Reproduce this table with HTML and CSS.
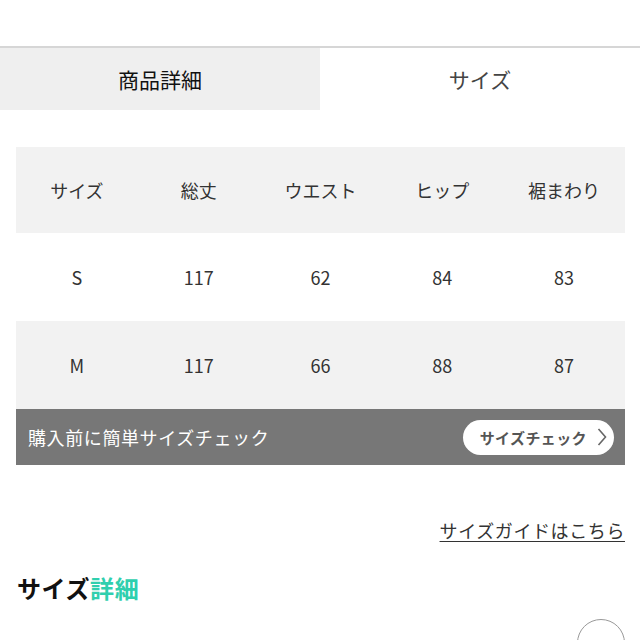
FILE: index.html
```html
<!DOCTYPE html>
<html lang="ja">
<head>
<meta charset="utf-8">
<link rel="stylesheet" href="styles.css">
</head>
<body>
<div class="page">
  <div class="tabs">
    <div class="tab tab-active">商品詳細</div>
    <div class="tab">サイズ</div>
  </div>

  <div class="size-table">
    <div class="row row-gray">
      <div class="cell">サイズ</div>
      <div class="cell">総丈</div>
      <div class="cell">ウエスト</div>
      <div class="cell">ヒップ</div>
      <div class="cell">裾まわり</div>
    </div>
    <div class="row">
      <div class="cell">S</div>
      <div class="cell">117</div>
      <div class="cell">62</div>
      <div class="cell">84</div>
      <div class="cell">83</div>
    </div>
    <div class="row row-gray">
      <div class="cell">M</div>
      <div class="cell">117</div>
      <div class="cell">66</div>
      <div class="cell">88</div>
      <div class="cell">87</div>
    </div>
    <div class="banner">
      <span class="banner-text">購入前に簡単サイズチェック</span>
      <span class="pill">サイズチェック
        <svg class="chev" width="12" height="20" viewBox="0 0 12 20"><path d="M2.5 2 L9.5 10 L2.5 18" fill="none" stroke="#666" stroke-width="1.6"/></svg>
      </span>
    </div>
  </div>

  <div class="guide-row"><a class="guide">サイズガイドはこちら</a></div>

  <h2 class="heading">サイズ<span class="accent">詳細</span></h2>

  <div class="circle-row"><div class="circle"></div></div>
</div>
</body>
</html>
```

FILE: styles.css
```css
html, body {
  margin: 0;
  padding: 0;
  background: #fff;
  overflow: hidden;
}
body {
  font-family: "Noto Sans CJK JP", "Noto Sans", sans-serif;
  color: #333;
}
.page {
  padding-top: 46px;
}
.tabs {
  display: flex;
  border-top: 2px solid #d6d6d6;
  height: 62px;
}
.tab {
  flex: 1;
  display: flex;
  align-items: center;
  justify-content: center;
  font-size: 21px;
  color: #444;
}
.tab-active {
  background: #efefef;
  color: #111;
}
.size-table {
  margin: 37px 15px 0 16px;
}
.row {
  display: grid;
  grid-template-columns: repeat(5, 1fr);
  height: 88px;
  align-items: center;
}
.row:first-child {
  height: 86px;
}
.row-gray {
  background: #f2f2f2;
}
.cell {
  text-align: center;
  font-size: 18px;
  color: #333;
}
.banner {
  display: flex;
  align-items: center;
  justify-content: space-between;
  background: #777777;
  height: 56px;
  padding: 0 11px 0 12px;
}
.banner-text {
  color: #fff;
  font-size: 18px;
  letter-spacing: 0.6px;
}
.pill {
  display: flex;
  align-items: center;
  gap: 9px;
  background: #fff;
  border-radius: 18px;
  height: 35px;
  padding: 0 6px 0 17px;
  font-size: 15px;
  letter-spacing: 0.4px;
  font-weight: bold;
  color: #555;
}
.chev {
  display: block;
}
.guide-row {
  display: flex;
  justify-content: flex-end;
  margin: 53px 15px 0 0;
}
.guide {
  font-size: 18px;
  line-height: 24px;
  letter-spacing: 0.6px;
  color: #333;
  text-decoration: underline;
  text-underline-offset: 3px;
}
.heading {
  margin: 31px 0 0 17px;
  font-size: 24px;
  line-height: 30px;
  letter-spacing: 0.6px;
  font-weight: bold;
  color: #111;
}
.accent {
  color: #2fcfae;
}
.circle-row {
  display: flex;
  justify-content: flex-end;
  margin: 16px 15px 0 0;
}
.circle {
  width: 46px;
  height: 46px;
  border: 1px solid #999;
  border-radius: 50%;
}
```
